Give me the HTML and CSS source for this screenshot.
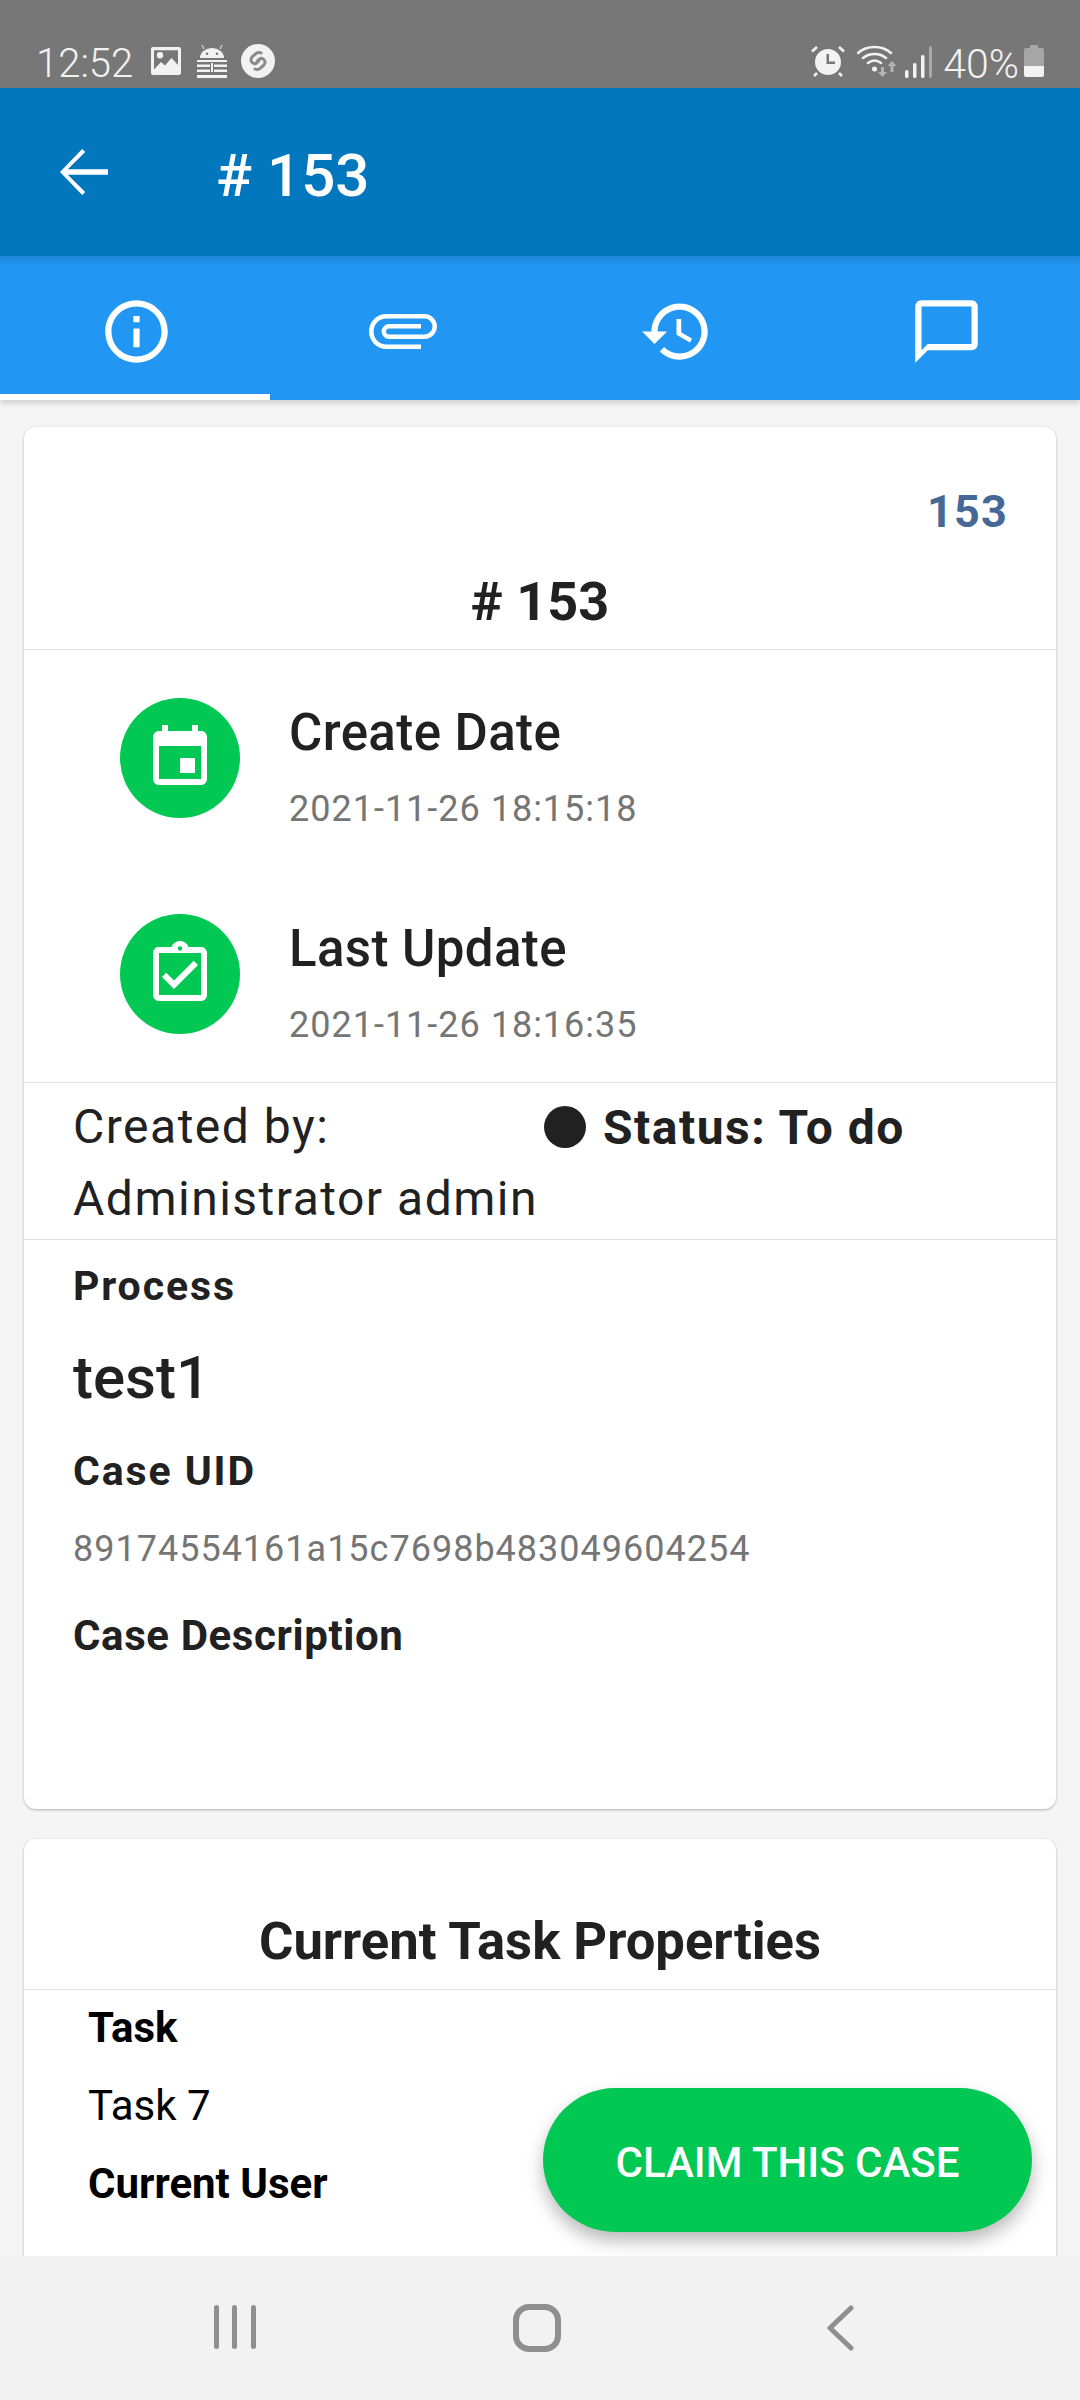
FILE: index.html
```html
<!DOCTYPE html>
<html lang="en">
<head>
<meta charset="utf-8">
<title>Case 153</title>
<link rel="stylesheet" href="styles.css">
</head>
<body>
<div class="screen">
  <div class="status">
    <div class="status-left">
      <span class="clock">12:52</span>
      <svg class="si si-img" viewBox="0 0 30 28"><path fill="#f2f2f2" fill-rule="evenodd" d="M2 0h26a2 2 0 0 1 2 2v24a2 2 0 0 1-2 2H2a2 2 0 0 1-2-2V2a2 2 0 0 1 2-2zM9 5a3.200 3.200 0 1 0 0 6.400 3.200 3.200 0 0 0 0-6.400zM3 22.500 10 15l4 3.500L20.500 11 27 18V3.200H3z"/></svg>
      <svg class="si si-and" viewBox="0 0 30 34"><g fill="none" stroke="#f2f2f2" stroke-width="1"><path d="M7 4 5 0M23 4l2-4"/></g><path fill="#f2f2f2" fill-rule="evenodd" d="M3 13a12 10 0 0 1 24 0zM10 7.500a1.300 1.300 0 1 0 0 2.600 1.300 1.300 0 0 0 0-2.600zM20 7.500a1.300 1.300 0 1 0 0 2.600 1.300 1.300 0 0 0 0-2.600z"/><path fill="#f2f2f2" d="M0 15h30v2H0zM0 19.500h13v2.500H0zM17 19.500h13v2.500H17zM0 24.500h13v2.500H0zM17 24.500h13v2.500H17zM0 30h30v3H0zM14 18h2v9h-2z"/></svg>
      <svg class="si si-sh" viewBox="0 0 34 34"><circle cx="17" cy="17" r="17" fill="#f2f2f2"/><path fill="none" stroke="#8a8a8a" stroke-width="3" stroke-linecap="round" d="M20 9c-1.500-.8-3.500-.6-5 .5l-3.500 3c-2 2-2 4.500-.3 6 1.500 1.300 3.500 1.300 5 0l1.500-1.500M14 25c1.500.8 3.500.6 5-.5l3.500-3c2-2 2-4.500.3-6-1.500-1.300-3.500-1.300-5 0l-1.500 1.500"/></svg>
    </div>
    <div class="status-right">
      <svg class="si si-alarm" viewBox="0 0 34 32"><path fill="#f2f2f2" fill-rule="evenodd" d="M17 4a13 13 0 1 1 0 26 13 13 0 0 1 0-26zM15.500 9v10H24v-2.500h-6V9z"/><path stroke="#f2f2f2" stroke-width="2.500" fill="none" d="M1 6.500 6 2M33 6.500 28 2M3 31l3-3M31 31l-3-3"/></svg>
      <svg class="si si-wifi" viewBox="0 0 40 32"><g fill="none" stroke="#f2f2f2" stroke-width="2.500" stroke-linecap="round"><path d="M1 8C10 0 25 0 34 8M6 13c6-5.500 17-5.500 23 0M11 18c4-3 9-3 13 0"/></g><circle cx="17.500" cy="24" r="2.500" fill="#f2f2f2"/><path fill="#b4b4b4" d="M24 22h3v5h3l-4.500 5-4.500-5h3zM35 16l4.500 5h-3v6h-3v-6h-3z"/></svg>
      <svg class="si si-sig" viewBox="0 0 27 32"><rect x="0" y="24" width="3.500" height="8" rx="1.500" fill="#f2f2f2"/><rect x="8" y="17" width="3.500" height="15" rx="1.500" fill="#f2f2f2"/><rect x="16" y="9" width="3.500" height="23" rx="1.500" fill="#f2f2f2"/><rect x="24" y="0" width="3" height="32" rx="1.500" fill="#a8a8a8"/></svg>
      <span class="pct">40%</span>
      <svg class="si si-bat" viewBox="0 0 20 32"><path fill="#a6a6a6" d="M6 0h8v3h4a2 2 0 0 1 2 2v16H0V5a2 2 0 0 1 2-2h4z"/><path fill="#f2f2f2" d="M0 21h20v9a2 2 0 0 1-2 2H2a2 2 0 0 1-2-2z"/></svg>
    </div>
  </div>

  <header class="appbar">
    <svg class="back" viewBox="0 0 24 24"><path d="M20 11.100H6.600l5.800-5.800L11.400 4.300 4 12l7.400 7.700 1-1-5.800-5.800H20z"/></svg>
    <h1 class="appbar-title"># 153</h1>
  </header>

  <nav class="tabs">
    <div class="tab tab-active"><svg viewBox="0 0 24 24"><path d="M11 7h2v2h-2zm0 4h2v6h-2zm1-9C6.480 2 2 6.480 2 12s4.480 10 10 10 10-4.480 10-10S17.520 2 12 2zm0 18c-4.410 0-8-3.590-8-8s3.590-8 8-8 8 3.590 8 8-3.590 8-8 8z"/></svg></div>
    <div class="tab"><svg class="clip" viewBox="0 0 68 35"><path d="M52 32.700H17.500C9 32.700 2.300 26 2.300 17.500S9 2.300 17.500 2.300H55.500a10.200 10.200 0 0 1 0 20.400H20a5.200 5.200 0 0 1 0-10.400H52"/></svg></div>
    <div class="tab"><svg viewBox="0 0 24 24"><path d="M13 3c-4.970 0-9 4.030-9 9H1l3.890 3.890.07.14L9 12H6c0-3.870 3.130-7 7-7s7 3.130 7 7-3.130 7-7 7c-1.930 0-3.680-.79-4.940-2.060l-1.420 1.420C8.270 19.990 10.510 21 13 21c4.970 0 9-4.030 9-9s-4.030-9-9-9zm-1 5v5l4.280 2.540.72-1.210-3.500-2.080V8H12z"/></svg></div>
    <div class="tab"><svg viewBox="0 0 24 24"><path d="M20 2H4c-1.100 0-2 .9-2 2v18l4-4h14c1.100 0 2-.9 2-2V4c0-1.100-.9-2-2-2zm0 14H6l-2 2V4h16v12z"/></svg></div>
  </nav>

  <main class="content">
    <section class="card">
      <div class="case-head">
        <div class="case-num">153</div>
        <h2 class="case-title"># 153</h2>
      </div>
      <div class="dates">
        <div class="date-row">
          <div class="bubble"><svg viewBox="0 0 24 24"><path d="M17 12h-5v5h5v-5zM16 1v2H8V1H6v2H5c-1.110 0-1.990.9-1.990 2L3 19c0 1.100.89 2 2 2h14c1.100 0 2-.9 2-2V5c0-1.100-.9-2-2-2h-1V1h-2zm3 18H5V8h14v11z"/></svg></div>
          <div class="date-text">
            <div class="date-label">Create Date</div>
            <div class="date-value">2021-11-26 18:15:18</div>
          </div>
        </div>
        <div class="date-row">
          <div class="bubble"><svg viewBox="0 0 24 24"><path d="M18 9l-1.410-1.420L10 14.170l-2.590-2.580L6 13l4 4zm1-6h-4.180C14.400 1.840 13.300 1 12 1c-1.300 0-2.400.84-2.820 2H5c-.14 0-.27.01-.4.04-.39.08-.74.28-1.010.55-.18.18-.33.4-.43.64-.1.23-.16.49-.16.77v14c0 .27.06.54.16.78s.25.45.43.64c.27.27.62.47 1.010.55.13.02.26.03.4.03h14c1.100 0 2-.9 2-2V5c0-1.100-.9-2-2-2zm-7-.25c.41 0 .75.34.75.75s-.34.75-.75.75-.75-.34-.75-.75.34-.75.75-.75zM19 19H5V5h14v14z"/></svg></div>
          <div class="date-text">
            <div class="date-label">Last Update</div>
            <div class="date-value">2021-11-26 18:16:35</div>
          </div>
        </div>
      </div>
      <div class="meta">
        <div class="meta-by">Created by:<br>Administrator admin</div>
        <div class="meta-status"><span class="dot"></span>Status: To do</div>
      </div>
      <div class="details">
        <div class="label">Process</div>
        <div class="process">test1</div>
        <div class="label label-uid">Case UID</div>
        <div class="uid">89174554161a15c7698b483049604254</div>
        <div class="label label-desc">Case Description</div>
      </div>
    </section>

    <section class="card card-task">
      <h2 class="task-title">Current Task Properties</h2>
      <div class="task-body">
        <div class="task-label">Task</div>
        <div class="task-value">Task 7</div>
        <div class="task-label task-gap">Current User</div>
      </div>
    </section>
    <button class="claim">CLAIM THIS CASE</button>
  </main>

  <footer class="sysnav">
    <svg class="nav-recents" viewBox="0 0 42 46"><rect x="0" y="1" width="5" height="44" rx="2.500"/><rect x="18" y="1" width="5" height="44" rx="2.500"/><rect x="37" y="1" width="5" height="44" rx="2.500"/></svg>
    <svg class="nav-home" viewBox="0 0 48 48"><rect x="3" y="3" width="42" height="42" rx="13" fill="none" stroke="#8f8f8f" stroke-width="6"/></svg>
    <svg class="nav-back" viewBox="0 0 28 46"><path d="M25 3 4 23l21 20" fill="none" stroke="#8f8f8f" stroke-width="5" stroke-linecap="round" stroke-linejoin="round"/></svg>
  </footer>
</div>
</body>
</html>
```

FILE: styles.css
```css
* { box-sizing: border-box; }
html, body { margin: 0; padding: 0; }
body { font-family: Roboto, "Liberation Sans", sans-serif; background: #f5f5f5; color: #212121; }
.screen { width: 1080px; height: 2400px; display: flex; flex-direction: column; overflow: hidden; }

.status { height: 88px; background: #777777; color: #f2f2f2; display: flex; justify-content: space-between; padding: 44px 36px 0 36px; flex: none; }
.status-left, .status-right { display: flex; align-items: flex-start; height: 34px; }
.clock { font-size: 40px; line-height: 36px; margin-top: 2px; font-weight: 300; margin-right: 18px; }
.pct { font-size: 41px; line-height: 36px; font-weight: 300; margin: 2px 5px 0 11px; }
.si { display: block; flex: none; }
.si-img { width: 30px; height: 28px; margin: 3px 16px 0 0; }
.si-and { width: 30px; height: 34px; margin: 1px 14px 0 0; }
.si-sh { width: 34px; height: 34px; }
.si-alarm { width: 34px; height: 32px; margin: 1px 12px 0 0; }
.si-wifi { width: 40px; height: 32px; margin: 1px 8px 0 0; }
.si-sig { width: 27px; height: 32px; margin-top: 2px; }
.si-bat { width: 20px; height: 32px; margin-top: 1px; }

.appbar { height: 168px; background: #0277bd; display: flex; align-items: center; flex: none; padding-left: 48px; position: relative; z-index: 2; color: #fff; }
.back { width: 72px; height: 72px; fill: #fff; }
.appbar-title { margin: 8px 0 0 96px; font-size: 60px; font-weight: 500; line-height: 60px; }

.tabs { height: 144px; background: #2196f3; display: flex; flex: none; box-shadow: 0 3px 6px rgba(0,0,0,.16); position: relative; z-index: 1; background-image: linear-gradient(rgba(0,0,0,.1), rgba(0,0,0,0) 10px); }
.tab { width: 270px; display: flex; align-items: center; justify-content: center; padding: 6px 0 0 3px; }
.tab svg { width: 75px; height: 75px; fill: #fff; }
.tab svg.clip { width: 68px; height: 35px; fill: none; stroke: #fff; stroke-width: 4.5; margin-right: 7px; }
.tab-active { border-bottom: 6px solid #fff; padding-top: 12px; }

.content { flex: 1; min-height: 0; padding: 27px 24px 0; position: relative; overflow: hidden; }
.card { background: #fff; border-radius: 12px; box-shadow: 0 1px 3px rgba(0,0,0,.28); height: 1382px; }
.card-task { margin-top: 30px; height: 600px; }

.case-head { padding: 57px 48px 0; border-bottom: 1px solid #e0e0e0; height: 223px; }
.case-num { text-align: right; font-size: 45px; font-weight: 700; line-height: 56px; color: #466896; letter-spacing: 1.2px; }
.case-title { margin: 32px 0 0; text-align: center; font-size: 54px; font-weight: 700; line-height: 60px; color: #212121; }

.dates { padding: 48px 0 48px 96px; border-bottom: 1px solid #e0e0e0; display: flex; flex-direction: column; gap: 96px; }
.date-row { display: flex; gap: 49px; height: 120px; }
.bubble { width: 120px; height: 120px; border-radius: 50%; background: #00c853; display: flex; align-items: center; justify-content: center; flex: none; }
.bubble svg { width: 72px; height: 72px; fill: #fff; }
.date-label { font-size: 51px; line-height: 70px; font-weight: 500; letter-spacing: .4px; }
.date-value { font-size: 36px; line-height: 40px; margin-top: 21px; color: #757575; letter-spacing: 1px; }

.meta { display: flex; padding: 8px 0 4px 49px; border-bottom: 1px solid #e0e0e0; }
.meta-by { width: 471px; font-size: 48px; line-height: 72px; letter-spacing: 1.5px; color: #212121; white-space: nowrap; flex: none; }
.meta-status { display: flex; align-items: center; height: 72px; font-size: 48px; font-weight: 700; letter-spacing: 1.5px; color: #212121; }
.dot { width: 42px; height: 42px; border-radius: 50%; background: #212121; margin-right: 17px; }

.details { padding: 21px 49px 0; }
.label { font-size: 41px; font-weight: 700; line-height: 50px; letter-spacing: 1.9px; }
.process { font-size: 60px; line-height: 80px; margin-top: 27px; font-weight: 500; }
.label-uid { margin-top: 28px; }
.uid { font-size: 36px; line-height: 50px; margin-top: 28px; color: #757575; letter-spacing: 1px; }
.label-desc { margin-top: 37px; font-size: 42px; letter-spacing: .6px; }

.task-title { margin: 0; padding: 72px 0 18px; text-align: center; font-size: 52.6px; font-weight: 700; line-height: 60px; border-bottom: 1px solid #e0e0e0; }
.task-body { padding: 13px 0 0 64px; color: #000; }
.task-label { font-size: 42px; font-weight: 700; line-height: 50px; }
.task-value { font-size: 42px; line-height: 50px; margin-top: 28px; }
.task-gap { margin-top: 28px; }

.claim { position: absolute; left: 543px; top: 1688px; width: 489px; height: 144px; border: 0; border-radius: 72px; background: #00c853; color: #fff; font: 500 42px/50px Roboto, sans-serif; box-shadow: 0 9px 18px rgba(0,0,0,.28); padding: 6px 0 0; }

.sysnav { height: 144px; background: #f2f2f2; flex: none; position: relative; z-index: 3; display: flex; align-items: flex-start; padding: 48px 0 0 214px; }
.nav-recents { width: 42px; height: 46px; fill: #8f8f8f; }
.nav-home { width: 48px; height: 48px; margin-left: 257px; }
.nav-back { width: 28px; height: 46px; margin: 1px 0 0 265px; }
```
